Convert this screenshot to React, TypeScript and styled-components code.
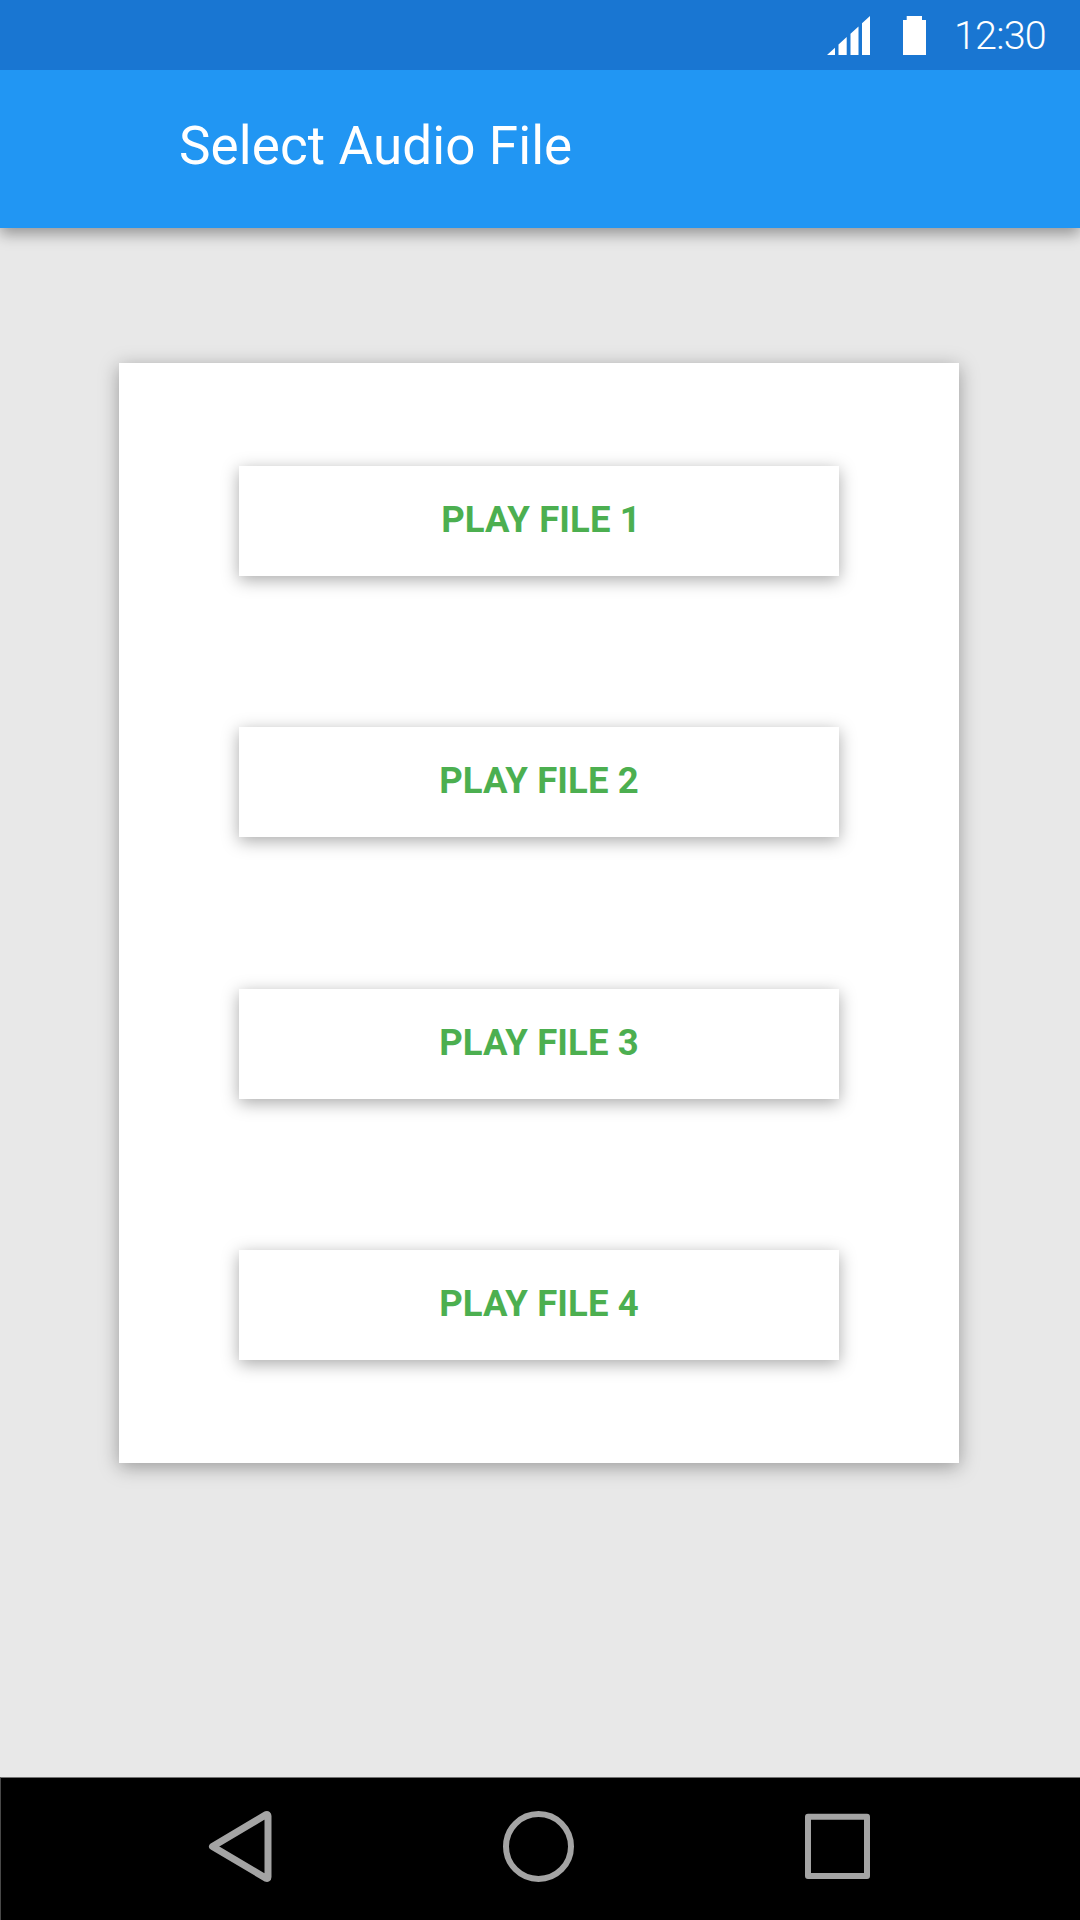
import React from "react";
import styled, { createGlobalStyle } from "styled-components";

const GlobalStyle = createGlobalStyle`
  *, *::before, *::after { box-sizing: border-box; }
  body { margin: 0; font-family: Roboto, "Liberation Sans", sans-serif; }
`;

const Screen = styled.div`
  display: flex;
  flex-direction: column;
  height: 1920px;
  width: 1080px;
  background: #e8e8e8;
  overflow: hidden;
`;

const Header = styled.header`
  flex: none;
  box-shadow: 0 6px 14px rgba(0, 0, 0, 0.36);
`;

const StatusBar = styled.div`
  display: flex;
  align-items: center;
  height: 70px;
  padding: 1px 0 0 827px;
  background: #1976d2;
  color: #fff;
`;

const SignalIcon = styled.svg`
  flex: none;
  width: 43px;
  height: 39px;
  margin-right: 33px;
`;

const BatteryIcon = styled.svg`
  flex: none;
  width: 23px;
  height: 39px;
  margin-right: 28px;
`;

const Clock = styled.time`
  font-size: 39.5px;
  font-weight: 300;
  line-height: 68px;
  letter-spacing: -0.8px;
  white-space: nowrap;
`;

const AppBar = styled.div`
  height: 158px;
  padding: 45px 0 0 179px;
  background: #2196f3;
`;

const Title = styled.h1`
  margin: 0;
  color: #fff;
  font-size: 53px;
  font-weight: 400;
  line-height: 62px;
  letter-spacing: 0.1px;
  white-space: nowrap;
`;

const Content = styled.main`
  flex: 1;
  padding: 135px 121px 0 119px;
`;

const Card = styled.section`
  display: flex;
  flex-direction: column;
  justify-content: space-between;
  height: 1100px;
  padding: 103px 120px;
  background: #fff;
  box-shadow: 0 4px 18px rgba(0, 0, 0, 0.34);
`;

const PlayButton = styled.button<{ $indent: number }>`
  height: 110px;
  padding: 0 0 2px ${(p) => p.$indent}px;
  border: 0;
  background: #fff;
  color: #4caf50;
  font: 700 36.5px/108px Roboto, "Liberation Sans", sans-serif;
  letter-spacing: 0.1px;
  text-align: center;
  box-shadow: 0 4px 16px rgba(0, 0, 0, 0.34);
`;

const NavBar = styled.nav`
  display: flex;
  align-items: flex-start;
  flex: none;
  height: 143px;
  padding: 32px 0 0 207px;
  border-top: 1px solid #747474;
  border-left: 1px solid #484848;
  background: #000;
`;

const NavIcon = styled.svg<{ $gap?: number; $stroke?: number }>`
  flex: none;
  width: 66px;
  height: 74px;
  margin-right: ${(p) => p.$gap ?? 0}px;
  overflow: visible;
  fill: none;
  stroke: #a4a4a4;
  stroke-width: ${(p) => p.$stroke ?? 6};
  stroke-linejoin: round;
`;

const files = [
  { label: "PLAY FILE 1", indent: 4 },
  { label: "PLAY FILE 2", indent: 0 },
  { label: "PLAY FILE 3", indent: 0 },
  { label: "PLAY FILE 4", indent: 0 },
];

export default function App() {
  return (
    <>
      <GlobalStyle />
      <Screen>
        <Header>
          <StatusBar>
            <SignalIcon viewBox="0 0 43 39" fill="#fff">
              <path d="M0 39L8 31.7V39ZM11.5 28.6L19.7 21.1V39H11.5ZM23.5 17.7L31.5 10.4V39H23.5ZM35 7.3L43 0V39H35Z" />
            </SignalIcon>
            <BatteryIcon viewBox="0 0 23 39" fill="#fff">
              <path d="M3.7 0H19V4H23V39H0V4H3.7Z" />
            </BatteryIcon>
            <Clock>12:30</Clock>
          </StatusBar>
          <AppBar>
            <Title>Select Audio File</Title>
          </AppBar>
        </Header>
        <Content>
          <Card>
            {files.map((file) => (
              <PlayButton key={file.label} $indent={file.indent}>
                {file.label}
              </PlayButton>
            ))}
          </Card>
        </Content>
        <NavBar>
          <NavIcon $gap={230} $stroke={7} viewBox="0 0 66 74">
            <path d="M4.5 36.5L58.2 4.6Q60 4 60 6V67Q60 69 58 68.2Z" />
          </NavIcon>
          <NavIcon $gap={235} viewBox="0 0 66 74">
            <circle cx="34.5" cy="36.5" r="32.5" />
          </NavIcon>
          <NavIcon viewBox="0 0 66 74">
            <rect x="3" y="6.8" width="59" height="59.2" />
          </NavIcon>
        </NavBar>
      </Screen>
    </>
  );
}
